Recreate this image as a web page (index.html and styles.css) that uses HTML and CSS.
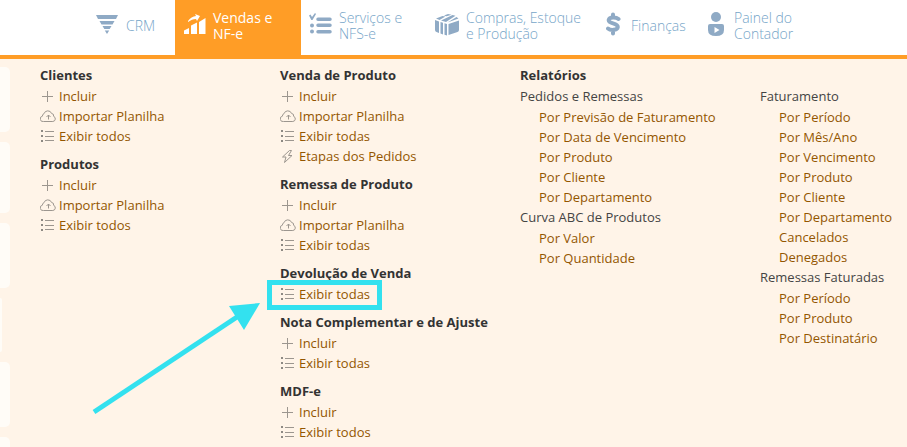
FILE: index.html
```html
<!DOCTYPE html>
<html lang="pt-BR">
<head>
<meta charset="utf-8">
<title>Vendas e NF-e</title>
<link rel="stylesheet" href="styles.css">
</head>
<body>
<svg class="sprite" aria-hidden="true">
  <symbol id="plus" viewBox="0 0 16 14"><path d="M7.500 2v11M2 7.500h11"/></symbol>
  <symbol id="cloud" viewBox="0 0 16 14"><path d="M3.500 12.500h9.300a2.700 2.700 0 0 0 .8-5.200a2.300 2.300 0 0 0-2-2.800A4 4 0 0 0 4 4.700A2.400 2.400 0 0 0 2.400 7.200A2.700 2.700 0 0 0 3.500 12.500zM8.500 10.500V6M6.500 8l2-2l2 2"/></symbol>
  <symbol id="list" viewBox="0 0 16 14"><path d="M5 2.500h9M5 7.500h9M5 11.500h9"/><path class="dots" d="M1 1h2v2H1zM1 6h2v2H1zM1 11h2v2H1z"/></symbol>
  <symbol id="bolt" viewBox="0 0 16 14"><path d="M9.500 1.500L2.500 8h3.500l-1.500 5.500L12 6.500H8.500L11.500 1.500z"/></symbol>
</svg>

<nav class="tabs">
  <a class="tab" href="#crm">
    <svg width="24" height="24" viewBox="0 0 24 24"><path d="M0 3h22l-2 4H2zM3.500 9h15l-2 3.500h-11zM6.500 14h9l-1.800 3H8.300zM8.800 18.500h4.400L11 22z"/></svg>
    <span>CRM</span>
  </a>
  <a class="tab active" href="#vendas">
    <svg width="24" height="24" viewBox="0 0 24 24"><path d="M1 18.500l5-2.500v6H1zM8 13.500l6-3v11.500H8zM16 10l6.500-4v16H16zM5 9c2-3 5-4.700 8-5l-1-2 5 2-3 5-1-2c-3 .2-5 1-8 3z"/></svg>
    <span>Vendas e<br>NF-e</span>
  </a>
  <a class="tab" href="#servicos">
    <svg width="24" height="24" viewBox="0 0 24 24"><path d="M0 3.500l1.500-1L3 5l3-4 1 1L3.500 8H2.300zM9 5.500h12a1.700 1.700 0 0 1 0 3.500H9a1.700 1.700 0 0 1 0-3.500zM9 11.500h12a1.700 1.700 0 0 1 0 3.500H9a1.700 1.700 0 0 1 0-3.500zM9 18h12a1.700 1.700 0 0 1 0 3.500H9a1.700 1.700 0 0 1 0-3.500z"/><circle cx="3" cy="13.500" r="2"/><circle cx="3" cy="19.500" r="2"/></svg>
    <span>Serviços e<br>NFS-e</span>
  </a>
  <a class="tab" href="#compras">
    <svg width="25" height="24" viewBox="0 0 25 24"><path d="M0 8l4 1.500V21L1.500 20Q0 19.300 0 18zM5.500 10l2.500.8v11.700l-2.500-1zM9.500 11.300l2.500.7v11.500l-2.500-.8zM13.500 12L24 8.500V18q0 1.500-1.500 2L13.500 23zM1 6.500L7.500 4l3 .5L4.500 8zM9 3.400L13 2l3.500.7-5 1.600zM6 8.500L17.500 3l3 .8L11 10zM12.500 10.500L21.500 5l2 1.500z"/></svg>
    <span>Compras, Estoque<br>e Produção</span>
  </a>
  <a class="tab" href="#financas">
    <svg width="19" height="24" viewBox="0 0 19 24"><path class="stroke" d="M12.500 7C10.500 5.300 3.500 4.500 2.700 8C2.200 12.200 11.800 10.500 11.800 15C11.300 18.800 4 18.300 2 16.500M7 2.500V5M7 19v2.500"/></svg>
    <span>Finanças</span>
  </a>
  <a class="tab" href="#contador">
    <svg width="21" height="24" viewBox="0 0 21 24"><circle cx="9" cy="5" r="5"/><path fill-rule="evenodd" d="M3 12h12q2 0 2 2v4q0 6-8 6T1 18v-4q0-2 2-2zm4.500 3v6l5-3z"/></svg>
    <span>Painel do<br>Contador</span>
  </a>
</nav>

<main class="menu">
  <div class="cards" aria-hidden="true"><i></i><i class="tall"></i><i></i><i class="slim"></i><i></i><i></i></div>

  <div class="column">
    <section>
      <h2>Clientes</h2>
      <ul>
        <li><svg><use href="#plus"/></svg><a href="#">Incluir</a></li>
        <li><svg><use href="#cloud"/></svg><a href="#">Importar Planilha</a></li>
        <li><svg><use href="#list"/></svg><a href="#">Exibir todos</a></li>
      </ul>
    </section>
    <section>
      <h2>Produtos</h2>
      <ul>
        <li><svg><use href="#plus"/></svg><a href="#">Incluir</a></li>
        <li><svg><use href="#cloud"/></svg><a href="#">Importar Planilha</a></li>
        <li><svg><use href="#list"/></svg><a href="#">Exibir todos</a></li>
      </ul>
    </section>
  </div>

  <div class="column">
    <section>
      <h2>Venda de Produto</h2>
      <ul>
        <li><svg><use href="#plus"/></svg><a href="#">Incluir</a></li>
        <li><svg><use href="#cloud"/></svg><a href="#">Importar Planilha</a></li>
        <li><svg><use href="#list"/></svg><a href="#">Exibir todas</a></li>
        <li><svg><use href="#bolt"/></svg><a href="#">Etapas dos Pedidos</a></li>
      </ul>
    </section>
    <section>
      <h2>Remessa de Produto</h2>
      <ul>
        <li><svg><use href="#plus"/></svg><a href="#">Incluir</a></li>
        <li><svg><use href="#cloud"/></svg><a href="#">Importar Planilha</a></li>
        <li><svg><use href="#list"/></svg><a href="#">Exibir todas</a></li>
      </ul>
    </section>
    <section>
      <h2>Devolução de Venda</h2>
      <ul>
        <li class="marked"><svg><use href="#list"/></svg><a href="#">Exibir todas</a>
          <span class="frame"></span>
          <svg class="arrow" viewBox="0 0 170 114"><path d="M2 110L148 13" stroke-width="5"/><path class="head" d="M168 1L137 4L152 28z"/></svg>
        </li>
      </ul>
    </section>
    <section>
      <h2>Nota Complementar e de Ajuste</h2>
      <ul>
        <li><svg><use href="#plus"/></svg><a href="#">Incluir</a></li>
        <li><svg><use href="#list"/></svg><a href="#">Exibir todas</a></li>
      </ul>
    </section>
    <section>
      <h2>MDF-e</h2>
      <ul>
        <li><svg><use href="#plus"/></svg><a href="#">Incluir</a></li>
        <li><svg><use href="#list"/></svg><a href="#">Exibir todos</a></li>
      </ul>
    </section>
  </div>

  <section class="reports">
    <h2>Relatórios</h2>
    <div class="column">
      <h3>Pedidos e Remessas</h3>
      <ul>
        <li><a href="#">Por Previsão de Faturamento</a></li>
        <li><a href="#">Por Data de Vencimento</a></li>
        <li><a href="#">Por Produto</a></li>
        <li><a href="#">Por Cliente</a></li>
        <li><a href="#">Por Departamento</a></li>
      </ul>
      <h3>Curva ABC de Produtos</h3>
      <ul>
        <li><a href="#">Por Valor</a></li>
        <li><a href="#">Por Quantidade</a></li>
      </ul>
    </div>
    <div class="column">
      <h3>Faturamento</h3>
      <ul>
        <li><a href="#">Por Período</a></li>
        <li><a href="#">Por Mês/Ano</a></li>
        <li><a href="#">Por Vencimento</a></li>
        <li><a href="#">Por Produto</a></li>
        <li><a href="#">Por Cliente</a></li>
        <li><a href="#">Por Departamento</a></li>
        <li><a href="#">Cancelados</a></li>
        <li><a href="#">Denegados</a></li>
      </ul>
      <h3>Remessas Faturadas</h3>
      <ul>
        <li><a href="#">Por Período</a></li>
        <li><a href="#">Por Produto</a></li>
        <li><a href="#">Por Destinatário</a></li>
      </ul>
    </div>
  </section>
</main>
</body>
</html>
```
FILE: styles.css
```css
* { box-sizing: border-box; }
body {
  margin: 0;
  min-height: 100vh;
  display: flex;
  flex-direction: column;
  background: #fff4e8;
  color: #333;
  font: 13px/20px "Open Sans", sans-serif;
}
h2, h3, ul { margin: 0; padding: 0; font-size: inherit; }
ul { list-style: none; }
a { color: #935600; text-decoration: none; }
.sprite { display: none; }

.tabs {
  display: grid;
  grid-template-columns: 87px 126px 126px 171px 101px 1fr;
  height: 59px;
  padding-left: 88px;
  background: #fff;
  border-bottom: 4px solid #ff9d26;
}
.tab {
  display: flex;
  align-items: flex-start;
  gap: 6px;
  padding: 10px 0 0 8px;
  color: #76a5c8;
  fill: #8faac5;
  font-size: 14px;
  font-weight: 300;
  line-height: 16px;
  white-space: nowrap;
}
.tab svg { flex: none; margin-top: 2px; }
.tab span { min-height: 32px; display: grid; align-content: center; }
.tab.active { background: #ff9d26; color: #fff; fill: #fff; font-weight: 400; }
.tab .stroke { fill: none; stroke: #8faac5; stroke-width: 4; stroke-linecap: round; }

.menu {
  flex: 1;
  display: grid;
  grid-template-columns: 40px 240px 240px 1fr;
}
.cards {
  display: flex;
  flex-direction: column;
  gap: 10px;
  padding-top: 8px;
}
.cards i {
  width: 10px;
  height: 65px;
  background: #fffcf7;
  border-radius: 0 5px 5px 0;
}
.cards i.tall { height: 71px; }
.cards i.slim { width: 2px; height: 54px; border-radius: 0 2px 2px 0; }
.cards i:last-child { height: auto; flex: 1; border-bottom-right-radius: 0; }

.menu > .column { display: flex; flex-direction: column; gap: 8px; padding-top: 6px; }
h2, h3 { line-height: 21px; }
h2 { font-weight: 700; }
h3 { font-weight: 400; color: #444; }
li { display: flex; align-items: center; gap: 3px; height: 20px; }
li svg { width: 16px; height: 14px; fill: none; stroke: #9c968f; stroke-width: 1; }
.dots { fill: #8d8983; stroke: none; }

.reports {
  display: grid;
  grid-template-columns: 240px 1fr;
  align-content: start;
  padding-top: 6px;
}
.reports h2 { grid-column: 1 / -1; }
.reports ul { padding-left: 19px; }

.marked { position: relative; }
.frame {
  position: absolute;
  left: -13px;
  top: -4px;
  width: 115px;
  height: 30px;
  border: 5px solid #33e1ef;
}
.marked .arrow {
  position: absolute;
  left: -188px;
  top: 18px;
  width: 170px;
  height: 114px;
  stroke: #33e1ef;
}
.marked .head { fill: #33e1ef; stroke: none; }
```
